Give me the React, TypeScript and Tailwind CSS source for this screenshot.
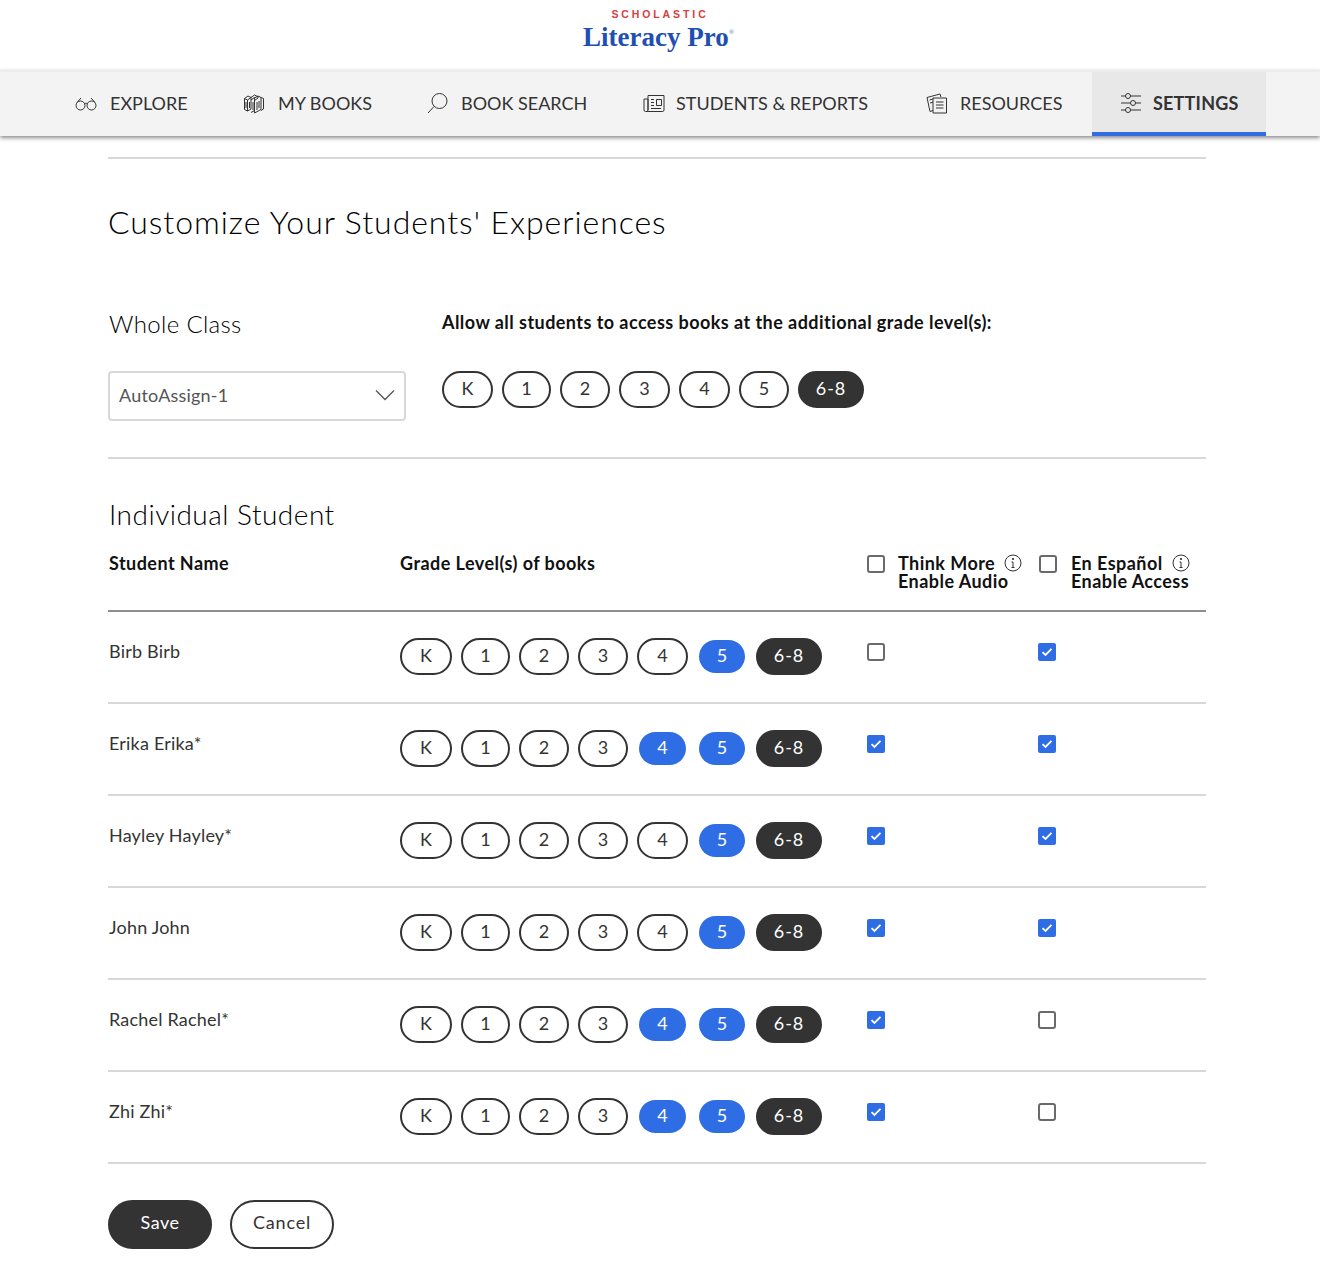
import React from "react";

const Glasses = () => (
  <svg width="24" height="24" viewBox="0 0 24 24" fill="none" stroke="#333" strokeWidth="1">
    <circle cx="6.5" cy="14.5" r="4.5" />
    <circle cx="17.5" cy="14.5" r="4.5" />
    <path d="M10.5 12.8c1-.8 2-.8 3 0M3 11.500 7 7M21 11.500 17 7" />
  </svg>
);
const Books = () => (
  <svg width="24" height="24" viewBox="0 0 24 24" fill="none" stroke="#333" strokeWidth="1">
    <path d="M2.5 7.5v11l3 1.5v-11zM2.5 7.5 6 5l3 1.5M5.500 9 9 6.500v11.500l-3.500 2M9 6.500 12.500 4l3 1.500M9 9l3.500-2.500v13l-3.500 2M12.500 7 16 5l3 1.500v12l-6.500 3.500v-3M16 5v2l-3.500 2.500M19 6.500l2.500 1V18L19 19.500" />
    <path d="M4 11v6M7.500 11v6M11 11v8M15 11v8M17 10v7" />
  </svg>
);
const Search = () => (
  <svg width="24" height="24" viewBox="0 0 24 24" fill="none" stroke="#333" strokeWidth="1">
    <circle cx="13.500" cy="10" r="7.500" />
    <path d="M8 15.500 2 22" />
  </svg>
);
const News = () => (
  <svg width="24" height="24" viewBox="0 0 24 24" fill="none" stroke="#333" strokeWidth="1">
    <path d="M6 19V4.500h16V19a1.500 1.500 0 0 1-1.500 1.500H3.500A1.500 1.500 0 0 1 2 19V8h4v11a1.500 1.500 0 0 1-1.500 1.500" />
    <path d="M9 8.500h3M9 11.500h3M9 14.500h3M9 17.500h10M14.500 8.500H19.500V14.500H14.500z" />
  </svg>
);
const Resources = () => (
  <svg width="24" height="24" viewBox="0 0 24 24" fill="none" stroke="#333" strokeWidth="1">
    <path d="M8 19.500 5 20.500 2 6.500 15 3l1 3" />
    <path d="M8 7h13.500v15H8z" />
    <path d="M11 11h7.500M11 14h7.500M11 17h7.500M4.500 9 8 8M5 12l3-.8" />
  </svg>
);
const Sliders = () => (
  <svg width="24" height="24" viewBox="0 0 24 24" fill="none" stroke="#333" strokeWidth="1">
    <circle cx="9" cy="5" r="2.500" />
    <circle cx="14" cy="12" r="2.500" />
    <circle cx="9" cy="19" r="2.500" />
    <path d="M2 5h4.500M11.500 5H22M2 12h9.500M16.500 12H22M2 19h4.500M11.500 19H22" />
  </svg>
);

const Info = () => (
  <svg width="18" height="18" viewBox="0 0 18 18" fill="none" stroke="#333" strokeWidth="1" className="shrink-0">
    <circle cx="9" cy="9" r="8" />
    <path d="M9 8v5.500M7.500 8H9M7.500 13.500h3" />
    <circle cx="9" cy="5" r="0.700" fill="#333" />
  </svg>
);

const Box = ({ on }: { on?: boolean }) =>
  on ? (
    <span className="flex h-[18px] w-[18px] shrink-0 items-center justify-center rounded-[2px] bg-[#2f6de4]">
      <svg width="12" height="10" viewBox="0 0 12 10" fill="none" stroke="#fff" strokeWidth="1.800">
        <path d="M1.500 5.200 4.500 8 10.500 1.800" />
      </svg>
    </span>
  ) : (
    <span className="block h-[18px] w-[18px] shrink-0 rounded-[3px] border-2 border-[#6a6a6a] bg-white" />
  );

type V = "off" | "blue" | "dark";
const Pill = ({ label, w, v }: { label: string; w: number; v: V }) => {
  const cls =
    v === "off"
      ? "border-[#333333] text-[#333333] bg-white"
      : v === "blue"
      ? "border-transparent bg-[#2f6de4] bg-clip-padding text-white"
      : "border-[#333333] bg-[#333333] text-white tracking-[1px]";
  return (
    <span
      style={{ width: w }}
      className={`flex h-[37px] shrink-0 items-center justify-center rounded-[19px] border-2 pb-[3px] text-[18px] ${cls}`}
    >
      {label}
    </span>
  );
};

const labels = ["K", "1", "2", "3", "4", "5", "6-8"];
const rowW = [52, 49, 50, 50, 51, 50, 66];
const topW = [51, 49, 50, 51, 51, 50, 66];

const Pills = ({ w, blue }: { w: number[]; blue: number[] }) => (
  <div className="flex gap-[9px]">
    {labels.map((l, i) => (
      <Pill key={l} label={l} w={w[i]} v={i === 6 ? "dark" : blue.includes(i) ? "blue" : "off"} />
    ))}
  </div>
);

const nav = [
  { t: "EXPLORE", I: Glasses, w: 168, g: 12 },
  { t: "MY BOOKS", I: Books, w: 184, g: 12 },
  { t: "BOOK SEARCH", I: Search, w: 216, g: 11 },
  { t: "STUDENTS & REPORTS", I: News, w: 283, g: 10 },
  { t: "RESOURCES", I: Resources, w: 194, g: 11 },
];

const students: { n: string; blue: number[]; a: boolean; b: boolean }[] = [
  { n: "Birb Birb", blue: [5], a: false, b: true },
  { n: "Erika Erika*", blue: [4, 5], a: true, b: true },
  { n: "Hayley Hayley*", blue: [5], a: true, b: true },
  { n: "John John", blue: [5], a: true, b: true },
  { n: "Rachel Rachel*", blue: [4, 5], a: true, b: false },
  { n: "Zhi Zhi*", blue: [4, 5], a: true, b: false },
];

export default function App() {
  return (
    <div className="min-h-[1284px] bg-white font-['Lato',sans-serif] text-[#333333]">
      <header className="flex h-[70px] flex-col items-center bg-white pt-[8px]">
        <div className="font-['Liberation_Sans',sans-serif] text-[10.500px] font-bold leading-[13px] tracking-[2.900px] text-[#d8403f]">
          SCHOLASTIC
        </div>
        <div className="mt-[1px] -ml-[3px] flex items-start font-['Liberation_Serif',serif] text-[27px] font-bold leading-[30px] text-[#1f4fb0]">
          Literacy Pro
          <span className="mt-[6px] text-[7px] leading-[8px] text-[#6f8fd0]">®</span>
        </div>
      </header>

      <nav className="relative flex h-[66px] border-t-2 border-[#ececec] bg-[#f3f3f3] pl-[47px] shadow-[0_2px_4px_rgba(0,0,0,0.45)]">
        {nav.map(({ t, I, w, g }) => (
          <a key={t} style={{ width: w, gap: g }} className="flex h-full items-center pb-[2px] pl-[27px] text-[18px] text-[#333333]">
            <I />
            <span className="whitespace-nowrap">{t}</span>
          </a>
        ))}
        <a className="flex h-full w-[174px] items-center gap-[10px] border-b-4 border-[#2f6de4] bg-[#e8e8e8] pl-[27px] pt-[2px] text-[18px] font-bold tracking-[0.200px] text-[#333333]">
          <Sliders />
          <span>SETTINGS</span>
        </a>
      </nav>

      <main className="mx-[108px] w-[1098px]">
        <div className="mt-[21px] border-t-2 border-[#d8d8d8] pt-[43px]">
          <h1 className="text-[32px] font-light leading-[40px] tracking-[0.950px] text-black">Customize Your Students' Experiences</h1>
        </div>

        <section className="mt-[66px] flex h-[151px] border-b-2 border-[#d8d8d8]">
          <div className="w-[298px]">
            <h2 className="pl-[1px] text-[24px] font-light leading-[31px] tracking-[0.350px] text-black">Whole Class</h2>
            <div className="mt-[32px] flex h-[50px] items-center justify-between rounded-[4px] border-2 border-[#d8d8d8] pb-[2px] pl-[9px] pr-[9px] text-[18px] tracking-[0.200px] text-[#555]">
              <span>AutoAssign-1</span>
              <svg width="20" height="12" viewBox="0 0 20 12" fill="none" stroke="#555" strokeWidth="1.300">
                <path d="M1 1.500 10 10.500 19 1.500" />
              </svg>
            </div>
          </div>
          <div className="ml-[36px] pt-[1px]">
            <p className="h-[32px] text-[18px] font-bold leading-[27px] tracking-[0.450px] text-[#111]">
              Allow all students to access books at the additional grade level(s):
            </p>
            <div className="mt-[30px]">
              <Pills w={topW} blue={[]} />
            </div>
          </div>
        </section>

        <h2 className="mt-[37px] pl-[1px] text-[28px] font-light leading-[36px] tracking-[0.500px] text-black">Individual Student</h2>

        <div className="mt-[14px] grid h-[66px] grid-cols-[292px_467px_171px_1fr] border-b-2 border-[#8e8e8e] text-[18px] font-bold leading-[18px] tracking-[0.450px] text-[#111]">
          <div className="pl-[1px] pt-[8px]">Student Name</div>
          <div className="pt-[8px]">Grade Level(s) of books</div>
          <div className="flex gap-[13px] pt-[8px]">
            <span className="pt-[1px]"><Box /></span>
            <div>
              <div className="flex w-[124px] items-center gap-[9px] whitespace-nowrap">
                Think More <Info />
              </div>
              <div className="whitespace-nowrap">Enable Audio</div>
            </div>
          </div>
          <div className="flex gap-[14px] pl-[1px] pt-[8px]">
            <span className="pt-[1px]"><Box /></span>
            <div>
              <div className="flex items-center gap-[9px] whitespace-nowrap">
                En Español <Info />
              </div>
              <div className="whitespace-nowrap">Enable Access</div>
            </div>
          </div>
        </div>

        {students.map((s) => (
          <div key={s.n} className="grid h-[92px] grid-cols-[292px_467px_171px_1fr] border-b-2 border-[#d8d8d8] pt-[26px] text-[18px] leading-[26px] tracking-[0.200px]">
            <div className="pl-[1px]">{s.n}</div>
            <Pills w={rowW} blue={s.blue} />
            <div className="pt-[5px]"><Box on={s.a} /></div>
            <div className="pt-[5px]"><Box on={s.b} /></div>
          </div>
        ))}

        <div className="mt-[36px] flex gap-[18px]">
          <button className="h-[49px] w-[104px] rounded-[25px] border-2 border-[#333333] bg-[#333333] pb-[4px] text-[18px] tracking-[0.500px] text-white">Save</button>
          <button className="h-[49px] w-[104px] rounded-[25px] border-2 border-[#333333] bg-white pb-[4px] text-[18px] tracking-[0.800px] text-[#333333]">Cancel</button>
        </div>
      </main>
    </div>
  );
}
